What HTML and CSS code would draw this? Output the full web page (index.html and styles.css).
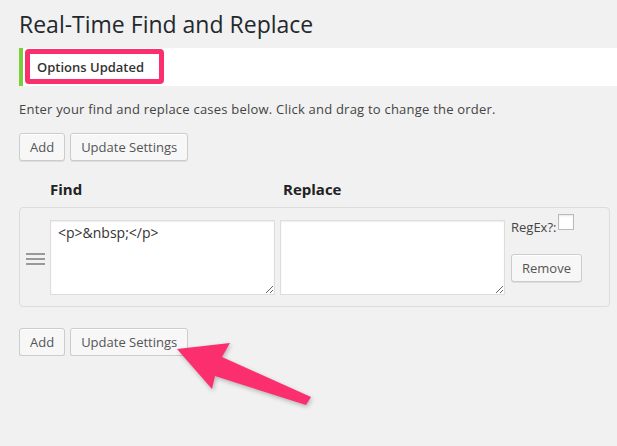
FILE: index.html
```html
<!DOCTYPE html>
<html lang="en">
<head>
    <meta charset="UTF-8">
    <title>Real-Time Find and Replace</title>
    <link rel="stylesheet" href="styles.css">
</head>
<body>

    <div class="wrap">
        <h2 class="page-title">Real-Time Find and Replace</h2>

        <div class="notice">
            <p class="notice-mark"><strong>Options Updated</strong></p>
        </div>

        <p class="intro">Enter your find and replace cases below. Click and drag to change the order.</p>

        <div class="actions">
            <button class="button">Add</button>
            <button class="button">Update Settings</button>
        </div>

        <div class="columns">
            <span class="col-find">Find</span>
            <span class="col-replace">Replace</span>
        </div>

        <div class="case">
            <span class="handle"><i></i><i></i><i></i></span>
            <textarea class="case-field">&lt;p&gt;&amp;nbsp;&lt;/p&gt;</textarea>
            <textarea class="case-field"></textarea>
            <div class="case-options">
                <label class="regex">RegEx?:<input type="checkbox" class="regex-box"></label>
                <button class="button remove">Remove</button>
            </div>
        </div>

        <div class="actions actions-bottom">
            <button class="button">Add</button>
            <button class="button">Update Settings</button>
        </div>
    </div>

    <!-- callout arrow pointing at the lower save button -->
    <svg class="callout-arrow" width="617" height="446" viewBox="0 0 617 446">
        <polygon points="177,349 230,343 222,357 311,397 306,405 215,376 212,389" fill="#fb2f6e"/>
    </svg>

</body>
</html>
```

FILE: styles.css
```css
body {
    margin: 0;
    background: #f1f1f1;
    font-family: 'Open Sans', sans-serif;
    font-size: 13px;
    line-height: 20px;
    color: #444;
}

.wrap {
    padding: 0 0 0 19px;
}

.page-title {
    margin: 0;
    padding: 10px 0 0;
    font-size: 23px;
    font-weight: 400;
    line-height: 29px;
    color: #23282d;
}

.notice {
    margin-top: 9px;
    height: 38px;
    box-sizing: border-box;
    background: #fff;
    border-left: 4px solid #7ad03a;
    display: flex;
    align-items: flex-start;
}

/* pink highlight drawn round the message */
.notice-mark {
    margin: 1px 0 0 2px;
    width: 139px;
    height: 35px;
    box-sizing: border-box;
    border: 5px solid #fb2f6e;
    border-radius: 4px;
    padding: 0 7px;
    display: flex;
    align-items: center;
    color: #333;
}

.notice-mark strong {
    font-weight: 600;
}

.intro {
    margin: 13px 0 0;
    letter-spacing: .22px;
}

.actions {
    margin-top: 14px;
    display: flex;
    gap: 5px;
}

.actions-bottom {
    margin-top: 21px;
}

.button {
    height: 28px;
    padding: 0 10px 1px;
    font-family: inherit;
    font-size: 13px;
    line-height: 26px;
    color: #555;
    background: #f7f7f7;
    border: 1px solid #ccc;
    border-radius: 3px;
    box-shadow: inset 0 1px 0 #fff, 0 1px 0 rgba(0, 0, 0, .08);
    cursor: pointer;
}

.columns {
    margin-top: 18px;
    padding-left: 31px;
    display: flex;
    font-size: 15px;
    font-weight: 700;
    color: #222;
}

.col-find {
    width: 233px;
}

.case {
    margin: 8px 7px 0 0;
    padding: 6px 0 11px 6px;
    border: 1px solid #dcdcdc;
    border-radius: 4px;
    display: flex;
    align-items: flex-start;
}

.handle {
    width: 19px;
    margin: 39px 5px 0 0;
    display: flex;
    flex-direction: column;
    gap: 3px;
}

.handle i {
    height: 2px;
    background: #999;
}

.case-field {
    width: 225px;
    height: 75px;
    margin: 6px 5px 0 0;
    box-sizing: border-box;
    padding: 2px 7px;
    font-family: inherit;
    font-size: 14px;
    line-height: 19px;
    color: #333;
    background: #fff;
    border: 1px solid #ddd;
    box-shadow: inset 0 1px 2px rgba(0, 0, 0, .07);
}

.case-options {
    margin-left: 1px;
    display: flex;
    flex-direction: column;
    align-items: flex-start;
}

.regex {
    line-height: 20px;
}

.regex-box {
    appearance: none;
    width: 16px;
    height: 16px;
    margin: 0 0 0 2px;
    vertical-align: 2px;
    background: #fff;
    border: 1px solid #bbb;
    box-shadow: inset 0 1px 2px rgba(0, 0, 0, .1);
}

.remove {
    margin-top: 17px;
}

.callout-arrow {
    position: absolute;
    left: 0;
    top: 0;
    pointer-events: none;
    filter: drop-shadow(1px 2px 2px rgba(0, 0, 0, .25));
}
```
